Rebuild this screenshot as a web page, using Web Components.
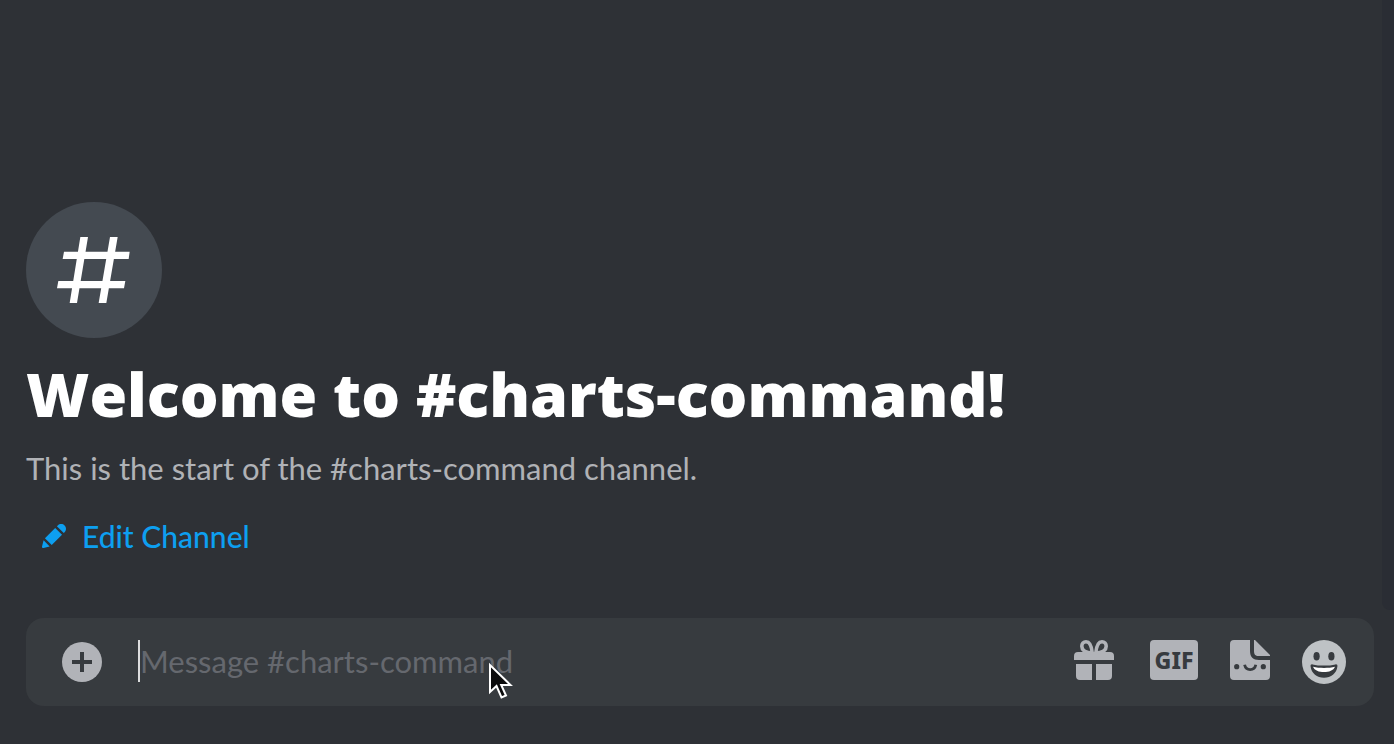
<!DOCTYPE html>
<html lang="en">
<head>
<meta charset="utf-8">
<meta name="viewport" content="width=device-width, initial-scale=1">
<title>#charts-command</title>
<style>
  body { margin: 0; background: #2e3136; font-family: Lato, "Open Sans", sans-serif; }
</style>
</head>
<body>
<channel-view>
  <channel-welcome name="charts-command"></channel-welcome>
  <message-composer slot="composer" channel="charts-command"></message-composer>
</channel-view>

<template id="channel-view">
  <style>
    :host { display: flex; flex-direction: column; min-height: 100vh; }
    .scroller { flex: 1; display: flex; }
    main { flex: 1; min-width: 0; display: flex; flex-direction: column; justify-content: flex-end; padding: 0 24px 54px 26px; }
    .track { width: 12px; background: #2a2d34; border-bottom-left-radius: 8px; }
    footer { padding: 8px 20px 38px 26px; }
  </style>
  <div class="scroller">
    <main><slot></slot></main>
    <div class="track"></div>
  </div>
  <footer><slot name="composer"></slot></footer>
</template>

<template id="channel-welcome">
  <style>
    :host { display: block; }
    .badge { display: block; width: 136px; height: 136px; }
    h1 { margin: 16px 0 0; font: 800 61px/80px "Open Sans", sans-serif; color: #fff; }
    p { margin: 14px 0 0; font-size: 31px; line-height: 40px; color: #b0b2b6; }
    .edit { margin-top: 28px; }
  </style>
  <svg class="badge" viewBox="18 36 408 408" aria-hidden="true">
    <circle cx="222" cy="240" r="204" fill="#444a51"/>
    <path fill="#fff" d="M181 141h23l-33 198h-22zM270 141h23l-34 198h-23zM132 185h197l-3 22H128zM115 273h201l-4 22H111z"/>
  </svg>
  <h1>Welcome to #<span class="name"></span>!</h1>
  <p>This is the start of the #<span class="name"></span> channel.</p>
  <edit-button class="edit">Edit Channel</edit-button>
</template>

<template id="edit-button">
  <style>
    :host { display: block; }
    button { display: flex; align-items: center; gap: 16px; margin: 0; padding: 0 16px; border: 0; background: none; color: #0d9ff0; font: 500 30px/40px Lato, sans-serif; cursor: pointer; }
    svg { width: 24px; height: 24px; fill: currentColor; }
  </style>
  <button type="button">
    <svg viewBox="3 3 18 18" aria-hidden="true"><path d="M19.2929 9.8299L19.9409 9.18278C21.353 7.77064 21.353 5.47197 19.9409 4.05892C18.5287 2.64678 16.2292 2.64678 14.817 4.05892L14.1699 4.70694L19.2929 9.8299ZM12.8962 5.97688L5.18469 13.6906L10.3085 18.813L18.0201 11.0992L12.8962 5.97688ZM4.11851 20.9704L8.75906 19.8112L4.18692 15.239L3.02678 19.8796C2.95028 20.1856 3.04028 20.5105 3.26349 20.7337C3.48669 20.9569 3.8116 21.046 4.11851 20.9704Z"/></svg>
    <span><slot></slot></span>
  </button>
</template>

<template id="message-composer">
  <style>
    :host { display: block; }
    form { display: flex; align-items: center; height: 88px; padding: 0 28px 0 36px; border-radius: 18px; background: #373b3f; }
    button { flex: none; display: block; margin: 0; padding: 0; border: 0; background: none; color: #b1b3b8; cursor: pointer; }
    svg { display: block; fill: currentColor; }
    .field { flex: 1; min-width: 0; display: flex; align-items: center; margin: 0 24px 2px 36px; position: relative; }
    .caret { width: 2px; height: 42px; background: #dcddde; }
    input { flex: 1; min-width: 0; margin: 0; padding: 0; border: 0; outline: 0; background: none; color: #dcddde; font: 31px/40px Lato, sans-serif; }
    input::placeholder { color: #65686e; opacity: 1; }
    .tools { display: flex; align-items: center; gap: 32px; }
    .gif { width: 48px; height: 40px; border-radius: 4px; background: #b1b3b8; color: #373b3f; font: 800 23px/40px "Noto Sans", sans-serif; text-align: center; }
    .raised { margin-bottom: 4px; }
    .pointer { position: absolute; left: 350px; top: 22px; pointer-events: none; }
  </style>
  <form>
    <button type="button" aria-label="Attach a file">
      <svg width="40" height="40" viewBox="0 0 40 40"><circle cx="20" cy="20" r="20"/><path fill="#373b3f" d="M18 10h4v8h8v4h-8v8h-4v-8h-8v-4h8z"/></svg>
    </button>
    <div class="field">
      <span class="caret"></span>
      <input type="text">
      <svg class="pointer" width="26" height="38" viewBox="0 0 26 38" aria-hidden="true"><path fill="#0b0b0c" stroke="#fff" stroke-width="2" d="M2 3V30L8.5 24L13.5 35.5L18 33.5L13.2 23H22.5Z"/></svg>
    </div>
    <div class="tools">
      <button class="raised" type="button" aria-label="Send a gift">
        <svg width="44" height="40" viewBox="0 0 44 40">
          <path d="M4 12H36A4 4 0 0 1 40 16V20H0V16A4 4 0 0 1 4 12ZM2 24H18V40H6A4 4 0 0 1 2 36ZM22 24H38V36A4 4 0 0 1 34 40H22Z"/>
          <path fill="none" stroke="currentColor" stroke-width="3.6" d="M18.2 13C17.6 6 15.5 1.8 12 1.8C9.5 1.8 7.8 3.7 7.8 6.2C7.8 10 11.5 12.5 18.2 13ZM21.8 13C22.4 6 24.5 1.8 28 1.8C30.5 1.8 32.2 3.7 32.2 6.2C32.2 10 28.5 12.5 21.8 13Z"/>
        </svg>
      </button>
      <button class="gif raised" type="button">GIF</button>
      <button class="raised" type="button" aria-label="Stickers">
        <svg width="40" height="40" viewBox="0 0 40 40">
          <path d="M4 0H20V11C20 17 23 20 29 20H40V36A4 4 0 0 1 36 40H4A4 4 0 0 1 0 36V4A4 4 0 0 1 4 0ZM24 0H25L40 15V16H29C25 16 24 14 24 11Z"/>
          <g fill="#373b3f"><circle cx="6.7" cy="26.7" r="2.6"/><circle cx="33.3" cy="26.7" r="2.6"/></g>
          <path fill="none" stroke="#373b3f" stroke-width="2.8" d="M14.6 24.8C16 31.3 24.4 31.3 25.8 24.8"/>
        </svg>
      </button>
      <button type="button" aria-label="Emoji">
        <svg width="44" height="44" viewBox="0 0 44 44">
          <circle cx="22" cy="22" r="22" fill="#bec2c5"/>
          <g fill="#373b3f"><ellipse cx="14.6" cy="16.2" rx="3.1" ry="4.3"/><ellipse cx="29.4" cy="16.2" rx="3.1" ry="4.3"/><path d="M10.6 24.4C17 26 27 26 33.4 24.4C35 24.1 35.6 25 35.4 26.5C34.6 33.4 29 37.8 22 37.8S9.4 33.4 8.6 26.5C8.4 25 9 24.1 10.6 24.4Z"/></g>
          <path fill="#fff" d="M11 26.7C17 28.3 27 28.3 33 26.7C31.5 30.5 27 32 22 32S12.5 30.5 11 26.7Z"/>
        </svg>
      </button>
    </div>
  </form>
</template>

<script>
  const stamp = (host) => {
    const root = host.attachShadow({ mode: "open" });
    root.append(document.getElementById(host.localName).content.cloneNode(true));
    return root;
  };

  class ChannelView extends HTMLElement {
    constructor() { super(); stamp(this); }
  }

  class EditButton extends HTMLElement {
    constructor() { super(); stamp(this); }
  }

  class ChannelWelcome extends HTMLElement {
    connectedCallback() {
      if (this.shadowRoot) return;
      const root = stamp(this);
      for (const el of root.querySelectorAll(".name")) el.textContent = this.getAttribute("name");
    }
  }

  class MessageComposer extends HTMLElement {
    connectedCallback() {
      if (this.shadowRoot) return;
      const root = stamp(this);
      const label = "Message #" + this.getAttribute("channel");
      const input = root.querySelector("input");
      input.placeholder = label;
      input.setAttribute("aria-label", label);
    }
  }

  customElements.define("edit-button", EditButton);
  customElements.define("channel-view", ChannelView);
  customElements.define("channel-welcome", ChannelWelcome);
  customElements.define("message-composer", MessageComposer);
</script>
</body>
</html>
